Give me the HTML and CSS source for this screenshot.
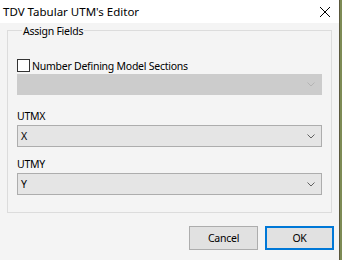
FILE: index.html
```html
<!DOCTYPE html>
<html lang="en">
<head>
    <meta charset="UTF-8">
    <title>TDV Tabular UTM's Editor</title>
    <link rel="stylesheet" href="styles.css">
</head>
<body>
    <div class="window">
        <div class="titlebar">
            <span class="title">TDV Tabular UTM's Editor</span>
            <svg class="close" width="12" height="12" viewBox="0 0 12 12">
                <path d="M1 1 L11 11 M11 1 L1 11" stroke="#000" stroke-width="1" fill="none"/>
            </svg>
        </div>

        <div class="content">
            <fieldset class="group">
                <legend>Assign Fields</legend>

                <label class="check-row">
                    <span class="checkbox"></span>
                    <span>Number Defining Model Sections</span>
                </label>
                <div class="combo disabled">
                    <span class="value"></span>
                    <svg class="chevron" width="8" height="5" viewBox="0 0 8 5"><path d="M0.5 0.5 L4 4 L7.5 0.5" fill="none" stroke-width="1"/></svg>
                </div>

                <div class="field-label first">UTMX</div>
                <div class="combo">
                    <span class="value">X</span>
                    <svg class="chevron" width="8" height="5" viewBox="0 0 8 5"><path d="M0.5 0.5 L4 4 L7.5 0.5" fill="none" stroke-width="1"/></svg>
                </div>

                <div class="field-label">UTMY</div>
                <div class="combo">
                    <span class="value">Y</span>
                    <svg class="chevron" width="8" height="5" viewBox="0 0 8 5"><path d="M0.5 0.5 L4 4 L7.5 0.5" fill="none" stroke-width="1"/></svg>
                </div>
            </fieldset>

            <div class="buttons">
                <button class="btn">Cancel</button>
                <button class="btn default">OK</button>
            </div>
        </div>
    </div>
</body>
</html>
```

FILE: styles.css
```css
body {
    margin: 0;
    width: 342px;
    height: 260px;
    background: #7d8b55;
    font-family: "Noto Sans", "Open Sans", sans-serif;
    font-size: 10.5px;
    letter-spacing: -0.25px;
    color: #000;
    display: flex;
}
.window {
    width: 339px;
    height: 260px;
    background: #f4f4f4;
    border-right: 1px solid #5a573c;
    display: flex;
    flex-direction: column;
}
.titlebar {
    height: 23px;
    flex-shrink: 0;
    background: #fff;
    display: flex;
    align-items: center;
    justify-content: space-between;
    padding: 0 8px 0 3px;
}
.title {
    font-size: 11.5px;
    letter-spacing: 0;
    line-height: 14px;
}
.close {
    display: block;
}
.content {
    display: flex;
    flex-direction: column;
    padding: 0 7px 0 7px;
}
.group {
    margin: 0;
    padding: 22px 9px 17px 9px;
    border: 1px solid #dcdcdc;
    min-width: 0;
    display: flex;
    flex-direction: column;
}
.group legend {
    padding: 2px 1px 0 1px;
    margin-left: 5px;
    line-height: 12px;
}
.check-row {
    display: flex;
    align-items: center;
    gap: 2px;
    height: 13px;
    line-height: 14px;
}
.checkbox {
    width: 11px;
    height: 11px;
    border: 1px solid #333;
    background: #fff;
    flex-shrink: 0;
}
.combo {
    box-sizing: border-box;
    height: 22px;
    border: 1px solid #adadad;
    background: #e5e5e5;
    display: flex;
    align-items: center;
    justify-content: space-between;
    padding: 0 6px 0 3px;
    margin-top: 2px;
    line-height: 14px;
}
.combo .chevron path {
    stroke: #606060;
}
.combo.disabled {
    height: 21px;
    margin-top: 2px;
    background: #cccccc;
    border-color: #cccccc;
}
.combo.disabled .chevron path {
    stroke: #b4b4b4;
}
.field-label {
    line-height: 14px;
    margin-top: 10px;
}
.field-label.first {
    margin-top: 14px;
}
.buttons {
    display: flex;
    justify-content: flex-end;
    gap: 7px;
    margin-top: 13px;
    margin-right: -2px;
}
.btn {
    box-sizing: border-box;
    width: 69px;
    height: 24px;
    font-family: inherit;
    font-size: 10.5px;
    letter-spacing: inherit;
    background: #e1e1e1;
    border: 1px solid #adadad;
    padding: 0;
    color: #000;
}
.btn.default {
    border: 2px solid #0078d7;
}
```
